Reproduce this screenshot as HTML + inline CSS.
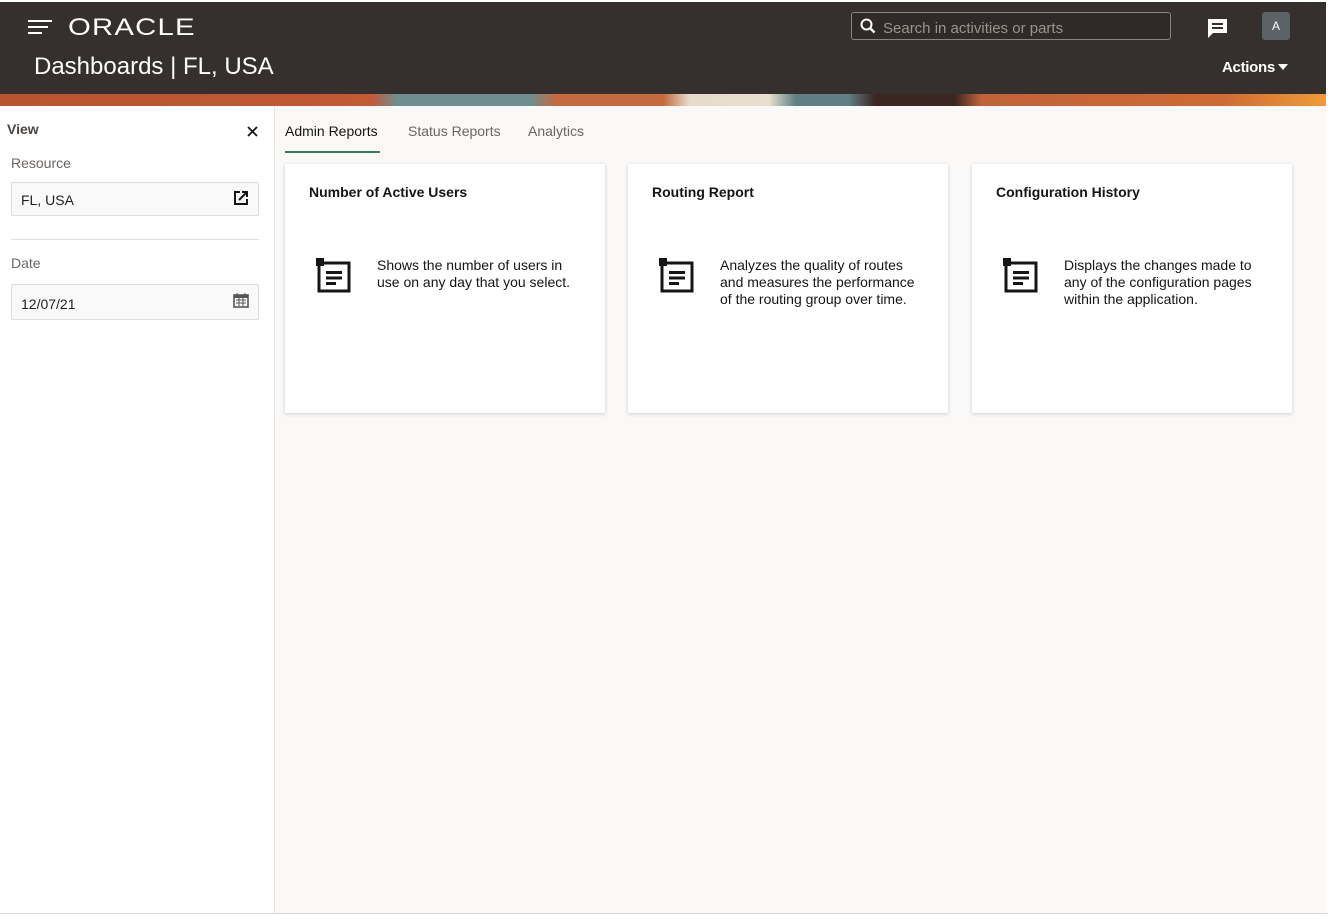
<!DOCTYPE html><html><head><style>
body{margin:0;width:1328px;height:916px;overflow:hidden;font-family:"Liberation Sans",sans-serif;background:#fff;position:relative}
.hdr{position:absolute;left:0;top:2px;width:1326px;height:92px;background:#35302d}
.ban{position:absolute;left:0;top:94px;width:1326px;height:12px;background:linear-gradient(90deg,#b8542f 0,#c25a34 28%,#6f8e92 30%,#6f8e92 40%,#c46a3c 42%,#c46a3c 50%,#e7dccb 52%,#e8dfcf 58%,#5f7f85 60%,#5f7f85 64%,#3b2622 66%,#3b2622 72%,#c1623a 74%,#d06a33 92%,#f09a38 100%)}
.side{position:absolute;left:0;top:106px;width:274px;height:807px;background:#fff;border-right:1px solid #e4e2e0}
.main{position:absolute;left:275px;top:106px;width:1051px;height:807px;background:#faf9f8}
.w{color:#fff;position:absolute}
.lbl{position:absolute;left:11px;font-size:14px;color:#6b6663}
.inp{position:absolute;left:11px;width:246px;height:34px;border:1px solid #dedbd8;background:#f9f9f9;border-radius:2px;font-size:14px;color:#222}
.card{position:absolute;top:58px;width:320px;height:249px;background:#fff;box-shadow:0 1px 4px rgba(0,0,0,.18)}
.card h3{margin:0;position:absolute;left:24px;top:20px;font-size:14px;color:#161513}
.card p{margin:0;position:absolute;left:92px;top:93px;width:210px;font-size:14px;line-height:17px;color:#161513}
.card svg{position:absolute;left:30px;top:93px}
.tab{position:absolute;top:17px;font-size:14px;color:#6b6663}
</style></head><body>
<div class="hdr">
<svg class="w" style="left:28px;top:16px" width="24" height="16"><rect x="0" y="2" width="24" height="2" fill="#fff"/><rect x="0" y="8" width="20" height="2" fill="#fff"/><rect x="0" y="14" width="14" height="2" fill="#fff"/></svg>
<div class="w" style="left:68px;top:12px;font-size:24px;letter-spacing:1px;transform:scaleX(1.22);transform-origin:left">ORACLE</div>
<div class="w" style="left:34px;top:51px;font-size:24px">Dashboards | FL, USA</div>
<div style="position:absolute;left:851px;top:10px;width:318px;height:26px;border:1px solid #8a8480;border-radius:3px;background:#2f2a27"><svg style="position:absolute;left:8px;top:5px" width="16" height="16"><circle cx="6.5" cy="6.5" r="5" stroke="#fff" stroke-width="2" fill="none"/><path d="M10 10l4.5 4.5" stroke="#fff" stroke-width="2.4"/></svg><span style="position:absolute;left:31px;top:7px;color:#9a9490;font-size:15px">Search in activities or parts</span></div>
<svg class="w" style="left:1207px;top:16px" width="22" height="21"><path d="M1 1h19v14H6l-5 5z" fill="#fff"/><rect x="5" y="5" width="11" height="2" fill="#35302d"/><rect x="5" y="9" width="11" height="2" fill="#35302d"/></svg>
<div style="position:absolute;left:1262px;top:10px;width:28px;height:28px;background:#5c6366;border-radius:3px;color:#fff;font-size:12px;text-align:center;line-height:28px">A</div>
<div class="w" style="left:1222px;top:57px;font-size:15px;font-weight:bold;letter-spacing:-0.3px">Actions</div>
<svg class="w" style="left:1278px;top:62px" width="10" height="6"><path d="M0 0h10L5 6z" fill="#fff"/></svg>
</div>
<div class="ban"></div>
<div class="side">
<div style="position:absolute;left:7px;top:15px;font-size:14px;font-weight:bold;color:#4a4542">View</div>
<svg style="position:absolute;left:247px;top:20px" width="11" height="11"><path d="M1 1l9 9M10 1l-9 9" stroke="#161513" stroke-width="1.8"/></svg>
<div class="lbl" style="top:49px">Resource</div>
<div class="inp" style="top:76px;height:32px"><span style="position:absolute;left:9px;top:9px">FL, USA</span><svg style="position:absolute;left:221px;top:7px" width="16" height="16"><path d="M7 2H2v12h12V9" stroke="#161513" stroke-width="2" fill="none"/><path d="M6 10l8-8M9 2h5v5" stroke="#161513" stroke-width="2" fill="none"/></svg></div>
<div style="position:absolute;left:11px;top:133px;width:248px;height:1px;background:#e0dedc"></div>
<div class="lbl" style="top:149px">Date</div>
<div class="inp" style="top:178px;height:34px"><span style="position:absolute;left:9px;top:11px">12/07/21</span><svg style="position:absolute;left:221px;top:7px" width="16" height="16"><rect x="1" y="3" width="14" height="12" fill="none" stroke="#555" stroke-width="1.6"/><rect x="1" y="3" width="14" height="3" fill="#555"/><path d="M4 1v3M12 1v3M3 8h10M3 11h10M6 6v8M10 6v8" stroke="#555"/></svg></div>
</div>
<div class="main">
<div class="tab" style="left:10px;color:#161513">Admin Reports</div>
<div style="position:absolute;left:10px;top:45px;width:95px;height:2px;background:#3f7a5f"></div>
<div class="tab" style="left:133px">Status Reports</div>
<div class="tab" style="left:253px">Analytics</div>
<div class="card" style="left:10px"><h3>Number of Active Users</h3><svg width="38" height="38"><rect x="4" y="6" width="30" height="28" fill="none" stroke="#161513" stroke-width="3"/><rect x="1" y="1" width="8" height="8" fill="#161513"/><rect x="11" y="14" width="16" height="3" fill="#161513"/><rect x="11" y="19.5" width="16" height="3" fill="#161513"/><rect x="11" y="25" width="10" height="3" fill="#161513"/></svg><p>Shows the number of users in use on any day that you select.</p></div>
<div class="card" style="left:353px"><h3>Routing Report</h3><svg width="38" height="38"><rect x="4" y="6" width="30" height="28" fill="none" stroke="#161513" stroke-width="3"/><rect x="1" y="1" width="8" height="8" fill="#161513"/><rect x="11" y="14" width="16" height="3" fill="#161513"/><rect x="11" y="19.5" width="16" height="3" fill="#161513"/><rect x="11" y="25" width="10" height="3" fill="#161513"/></svg><p>Analyzes the quality of routes and measures the performance of the routing group over time.</p></div>
<div class="card" style="left:697px"><h3>Configuration History</h3><svg width="38" height="38"><rect x="4" y="6" width="30" height="28" fill="none" stroke="#161513" stroke-width="3"/><rect x="1" y="1" width="8" height="8" fill="#161513"/><rect x="11" y="14" width="16" height="3" fill="#161513"/><rect x="11" y="19.5" width="16" height="3" fill="#161513"/><rect x="11" y="25" width="10" height="3" fill="#161513"/></svg><p>Displays the changes made to any of the configuration pages within the application.</p></div>
</div>
<div style="position:absolute;left:0;top:913px;width:1328px;height:1px;background:#d8d6d4"></div>
</body></html>
